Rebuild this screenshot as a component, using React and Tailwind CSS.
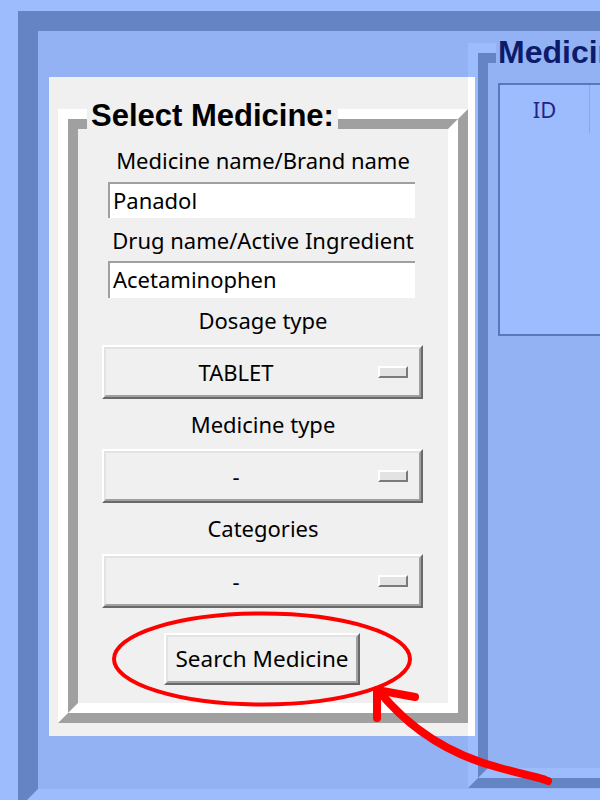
import React from 'react';

const ui = { fontFamily: '"Noto Sans", "DejaVu Sans", sans-serif' };
const bold = { fontFamily: '"Liberation Sans", Arial, sans-serif' };

const FieldLabel = ({ children, className = '' }) => (
  <div className={`h-[26px] leading-[26px] text-[22px] text-center text-black whitespace-nowrap ${className}`}>
    {children}
  </div>
);

const Entry = ({ value, className = '' }) => (
  <div className={`ml-[30px] w-[307px] h-[36px] bg-white border-t-2 border-l-2 border-[#a0a0a0] pl-[3px] text-[22px] leading-[32px] text-black ${className}`}>
    {value}
  </div>
);

// tk-style raised box: white/dark outer edge, light/gray inner edge
const Raised = ({ className = '', children }) => (
  <div className={`border-2 border-t-white border-l-white border-b-[#696969] border-r-[#696969] ${className}`}>
    <div className="h-full border-2 border-t-[#e3e3e3] border-l-[#e3e3e3] border-b-[#a0a0a0] border-r-[#a0a0a0] bg-[#f0f0f0] flex items-center">
      {children}
    </div>
  </div>
);

const OptionMenu = ({ value, className = '' }) => (
  <Raised className={`ml-[24px] w-[321px] h-[54px] ${className}`}>
    <div className="flex-1 mr-[12px] text-center text-[22px] text-black">{value}</div>
    <div className="w-[30px] h-[12px] mr-[11px] border-2 border-t-white border-l-white border-b-[#7a7a7a] border-r-[#7a7a7a] bg-[#e3e3e3]" />
  </Raised>
);

const SelectPanel = () => (
  <div className="relative z-10 ml-[11px] mt-[46px] w-[426px] h-[659px] bg-[#f0f0f0] border-r-[7px] border-white pl-[9px] pt-[32px]">
    <div className="relative w-[410px] h-[614px] border-[10px] border-t-white border-l-white border-b-[#a0a0a0] border-r-[#a0a0a0]">
      <div
        className="absolute left-[19px] top-[-21px] h-[36px] px-[4px] bg-[#f0f0f0] text-[31px] leading-[36px] font-bold text-black whitespace-nowrap"
        style={bold}
      >
        Select Medicine:
      </div>
      <div className="h-full border-[10px] border-t-[#a0a0a0] border-l-[#a0a0a0] border-b-white border-r-white pt-[18px]" style={ui}>
        <FieldLabel>Medicine name/Brand name</FieldLabel>
        <Entry value="Panadol" className="mt-[9px]" />
        <FieldLabel className="mt-[9px]">Drug name/Active Ingredient</FieldLabel>
        <Entry value="Acetaminophen" className="mt-[8px] h-[37px]" />
        <FieldLabel className="mt-[9px]">Dosage type</FieldLabel>
        <OptionMenu value="TABLET" className="mt-[12px]" />
        <FieldLabel className="mt-[12px]">Medicine type</FieldLabel>
        <OptionMenu value="-" className="mt-[12px] h-[53px]" />
        <FieldLabel className="mt-[12px]">Categories</FieldLabel>
        <OptionMenu value="-" className="mt-[13px] h-[53px]" />
        <Raised className="mt-[25px] ml-[86px] w-[196px] h-[52px]">
          <div className="flex-1 text-center text-[22.5px] text-black whitespace-nowrap">Search Medicine</div>
        </Raised>
      </div>
    </div>
  </div>
);

const ResultsPanel = () => (
  <div className="relative -ml-[7px] mt-[12px] w-[400px] h-[745px] border-[10px] border-t-[#9dbcfd] border-l-[#9dbcfd] border-b-[#6584c4] border-r-[#6584c4]">
    <div
      className="absolute left-[18px] top-[-19px] h-[36px] pl-[2px] pr-[4px] bg-[#93b2f4] text-[32px] leading-[36px] font-bold text-[#0c1c6c] whitespace-nowrap z-10"
      style={bold}
    >
      Medicine List
    </div>
    <div className="h-full border-[10px] border-t-[#6584c4] border-l-[#6584c4] border-b-[#9dbcfd] border-r-[#9dbcfd] bg-[#93b2f4] pt-[20px] pl-[10px]">
      <div className="w-[320px] h-[253px] border-2 border-[#5878bc] bg-[#9dbcfd]" style={ui}>
        <div className="flex h-[50px]">
          <div className="w-[89px] text-center text-[22px] leading-[48px] text-[#23238a]">ID</div>
          <div className="w-px h-[48px] bg-[#8aa6ea]" />
          <div className="flex-1" />
        </div>
      </div>
    </div>
  </div>
);

export default function App() {
  return (
    <div className="relative w-[600px] h-[800px] overflow-hidden bg-[#9dbcfd]">
      <div className="pt-[11px] pl-[18px]">
        <div className="w-[700px] border-[20px] border-t-[#6584c4] border-l-[#6584c4] border-b-[#9dbcfd] border-r-[#9dbcfd] bg-[#93b2f4]">
          <div className="flex items-start h-[758px]">
            <SelectPanel />
            <ResultsPanel />
          </div>
        </div>
      </div>

      {/* red annotation drawn over the screenshot */}
      <svg className="absolute inset-0 z-20 pointer-events-none" width="600" height="800" viewBox="0 0 600 800">
        <ellipse cx="262" cy="659" rx="148" ry="45.5" fill="none" stroke="#ff0000" strokeWidth="4" />
        <g fill="none" stroke="#ff0000" strokeWidth="8" strokeLinecap="round" strokeLinejoin="round">
          <path d="M378 690 C410 730 450 755 500 768 S540 778 548 781" />
          <path d="M377 690 L377 718" />
          <path d="M377 690 L415 697" />
        </g>
      </svg>
    </div>
  );
}
